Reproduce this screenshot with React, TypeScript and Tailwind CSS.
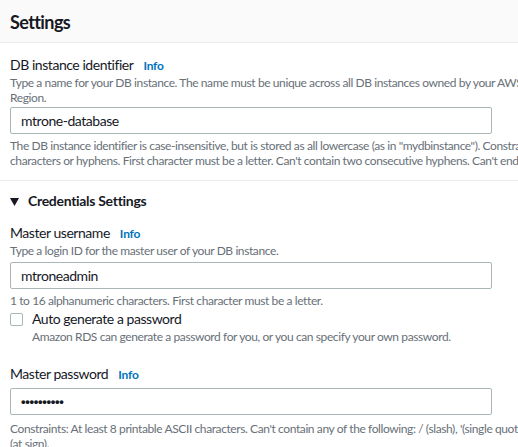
import { ReactNode } from "react";

const font = { fontFamily: "Lato, 'Liberation Sans', sans-serif" };

function Label({ text, className = "" }: { text: string; className?: string }) {
  return (
    <div className={`flex items-baseline gap-[10px] leading-[18px] ${className}`}>
      <span className="text-[14px] text-[#16191f] tracking-[-0.45px]">{text}</span>
      <span className="text-[12px] font-bold text-[#0073bb] tracking-[-0.2px]">Info</span>
    </div>
  );
}

function Hint({ children, className = "" }: { children: ReactNode; className?: string }) {
  return (
    <div className={`text-[12px] leading-[15px] text-[#687078] whitespace-nowrap tracking-[-0.4px] ${className}`}>
      {children}
    </div>
  );
}

function Field({ value, className = "" }: { value: ReactNode; className?: string }) {
  return (
    <div
      className={`w-[482px] h-[27px] flex items-center px-[10px] border border-[#aab7b8] rounded-[2px] bg-white text-[14px] text-[#16191f] tracking-[-0.45px] ${className}`}
    >
      {value}
    </div>
  );
}

export default function App() {
  return (
    <div className="w-[518px] h-[447px] overflow-hidden bg-white" style={font}>
      <div className="w-[640px]">
        {/* header */}
        <div className="h-[43px] bg-[#fafafa] border-b border-[#eaeded] flex items-center px-[10px]">
          <h2 className="text-[18px] font-bold text-[#16191f] leading-none mt-[2px] tracking-[-0.6px]">Settings</h2>
        </div>

        <div className="px-[10px]">
          <Label text="DB instance identifier" className="mt-[13px]" />
          <Hint>
            <div>Type a name for your DB instance. The name must be unique across all DB instances owned by your AWS account in the current AWS</div>
            <div>Region.</div>
          </Hint>
          <Field value="mtrone-database" className="mt-[2px]" />
          <Hint className="mt-[4px]">
            <div>The DB instance identifier is case-insensitive, but is stored as all lowercase (as in "mydbinstance"). Constraints: 1 to 60 alphanumeric</div>
            <div>characters or hyphens. First character must be a letter. Can't contain two consecutive hyphens. Can't end with a hyphen.</div>
          </Hint>
        </div>

        <div className="mt-[12px] border-t border-[#eaeded]" />

        <div className="px-[10px]">
          <div className="mt-[10px] flex items-center gap-[9px] leading-[20px]">
            <svg width="9" height="8" viewBox="0 0 9 8" className="mt-[1px]">
              <path d="M0 0 H9 L4.5 8 Z" fill="#16191f" />
            </svg>
            <span className="text-[14px] font-bold text-[#16191f] tracking-[-0.3px]">Credentials Settings</span>
          </div>

          <Label text="Master username" className="mt-[13px]" />
          <Hint>Type a login ID for the master user of your DB instance.</Hint>
          <Field value="mtroneadmin" className="mt-[4px]" />
          <Hint className="mt-[4px]">1 to 16 alphanumeric characters. First character must be a letter.</Hint>

          <div className="mt-[1px] flex gap-[9px]">
            <div className="mt-[4px] w-[13px] h-[13px] border border-[#aab7b8] rounded-[2px] bg-white shrink-0" />
            <div>
              <div className="text-[14px] leading-[20px] text-[#16191f] tracking-[-0.45px]">Auto generate a password</div>
              <Hint>Amazon RDS can generate a password for you, or you can specify your own password.</Hint>
            </div>
          </div>

          <Label text="Master password" className="mt-[21px]" />
          <Field
            value={
              <span className="text-[13px] font-bold tracking-[-0.3px]" style={{ fontFamily: "'Liberation Sans', sans-serif" }}>
                ••••••••••
              </span>
            }
            className="mt-[4px]"
          />
          <Hint className="mt-[6px]">
            <div>Constraints: At least 8 printable ASCII characters. Can't contain any of the following: / (slash), '(single quote), "(double quote) and @</div>
            <div>(at sign).</div>
          </Hint>
        </div>
      </div>
    </div>
  );
}
